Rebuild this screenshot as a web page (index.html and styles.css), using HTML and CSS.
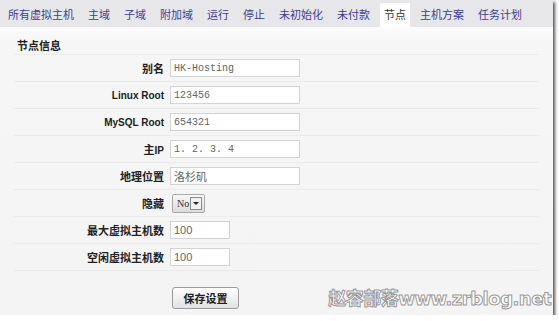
FILE: index.html
```html
<!DOCTYPE html>
<html lang="zh-CN">

<head>
    <meta charset="UTF-8">
    <meta name="viewport" content="width=device-width, initial-scale=1.0">
    <title>节点</title>
    <link rel="stylesheet" href="styles.css">
</head>

<body>
    <div class="frame">
        <ul class="tabs">
            <li>所有虚拟主机</li>
            <li>主域</li>
            <li>子域</li>
            <li>附加域</li>
            <li>运行</li>
            <li>停止</li>
            <li>未初始化</li>
            <li>未付款</li>
            <li class="active">节点</li>
            <li>主机方案</li>
            <li>任务计划</li>
        </ul>

        <div class="panel">
            <h3 class="panelTitle">节点信息</h3>

            <div class="row">
                <label>别名</label>
                <input type="text" class="wide mono" value="HK-Hosting">
            </div>
            <div class="row">
                <label class="latin">Linux Root</label>
                <input type="text" class="wide mono" value="123456">
            </div>
            <div class="row">
                <label class="latin">MySQL Root</label>
                <input type="text" class="wide mono" value="654321">
            </div>
            <div class="row">
                <label>主<span class="latin">IP</span></label>
                <input type="text" class="wide mono" value="1. 2. 3. 4">
            </div>
            <div class="row">
                <label>地理位置</label>
                <input type="text" class="wide" value="洛杉矶">
            </div>
            <div class="row">
                <label>隐藏</label>
                <span class="fakeSelect">
                    <span class="selValue">No</span>
                    <span class="selArrow"></span>
                </span>
            </div>
            <div class="row">
                <label>最大虚拟主机数</label>
                <input type="text" class="short" value="100">
            </div>
            <div class="row">
                <label>空闲虚拟主机数</label>
                <input type="text" class="short" value="100">
            </div>

            <div class="buttonRow">
                <button>保存设置</button>
            </div>
        </div>

        <div class="watermark">赵容部落www.zrblog.net</div>
    </div>
</body>

</html>
```

FILE: styles.css
```css
body {
    margin: 0;
    background: #ffffff;
    color: #222222;
    font-family: "Liberation Sans", "Noto Sans CJK SC", sans-serif;
    font-size: 11px;
}

.frame {
    position: relative;
    width: 553px;
    height: 315px;
    background: #f4f4f4;
    box-shadow: 2px 2px 3px #555555;
    display: flex;
    flex-direction: column;
}

.tabs {
    list-style: none;
    margin: 0;
    padding: 0 0 0 1px;
    height: 27px;
    display: flex;
    align-items: flex-end;
    background: #e7e7ea;
}

.tabs li {
    height: 24px;
    line-height: 22px;
    padding: 0 7px;
    color: #3c3c98;
    font-family: "Noto Sans CJK SC", sans-serif;
    font-size: 11px;
}

.tabs li.active {
    background: #ffffff;
    color: #333333;
    padding: 0 4px;
    margin: 0 3px;
}

.panel {
    flex: 1;
    padding: 0 14px;
    background: linear-gradient(to bottom, #fcfcfc 0px, #f6f6f6 14px, #f4f4f4 100%);
}

.panelTitle {
    margin: 0;
    height: 27px;
    line-height: 36px;
    padding-left: 3px;
    font-family: "Noto Sans CJK SC", sans-serif;
    font-size: 11px;
    font-weight: bold;
    color: #222222;
    border-bottom: 1px solid #ececec;
}

.row {
    height: 26px;
    display: flex;
    align-items: center;
    border-bottom: 1px solid #ebebeb;
}

.row label {
    width: 150px;
    text-align: right;
    padding-right: 6px;
    font-family: "Noto Sans CJK SC", sans-serif;
    font-weight: bold;
    font-size: 11px;
    color: #222222;
}

.row label.latin,
.row label .latin {
    font-family: "Liberation Sans", sans-serif;
    font-size: 10px;
}

input[type=text] {
    box-sizing: border-box;
    height: 18px;
    margin: 0;
    padding: 0 0 0 3px;
    border: 1px solid #d4d4d4;
    background: #ffffff;
    color: #666666;
    font-family: "Liberation Sans", "Noto Sans CJK SC", sans-serif;
    font-size: 11px;
}

input.mono {
    font-family: "Liberation Mono", monospace;
    font-size: 10px;
}

input.wide {
    width: 130px;
}

input.short {
    width: 60px;
}

.fakeSelect {
    box-sizing: border-box;
    width: 33px;
    height: 19px;
    margin-left: 2px;
    display: flex;
    align-items: center;
    justify-content: space-between;
    padding: 0 2px 0 4px;
    border: 1px solid #a9a9a9;
    border-radius: 2px;
    background: linear-gradient(to bottom, #f7f7f7, #dcdcdc);
}

.selValue {
    font-family: "Liberation Serif", serif;
    font-size: 10px;
    color: #333333;
}

.selArrow {
    position: relative;
    width: 10px;
    height: 11px;
    border: 1px solid #8c8c8c;
    background: #f2f2f2;
}

.selArrow::after {
    content: "";
    position: absolute;
    left: 2px;
    top: 4px;
    border-left: 3px solid transparent;
    border-right: 3px solid transparent;
    border-top: 3px solid #222222;
}

.buttonRow {
    padding: 16px 0 0 158px;
}

button {
    width: 67px;
    height: 22px;
    border: 1px solid #9c9c9c;
    border-radius: 3px;
    background: linear-gradient(to bottom, #ffffff, #e2e2e2);
    font-family: "Noto Sans CJK SC", sans-serif;
    font-size: 11px;
    font-weight: bold;
    color: #222222;
    padding: 0;
}

.watermark {
    position: absolute;
    right: 2px;
    bottom: 5px;
    font-family: "DejaVu Sans", "Noto Sans CJK SC", sans-serif;
    font-size: 18px;
    font-weight: bold;
    letter-spacing: -0.5px;
    color: #ffffff;
    -webkit-text-stroke: 1px #9a9a9a;
}
```
